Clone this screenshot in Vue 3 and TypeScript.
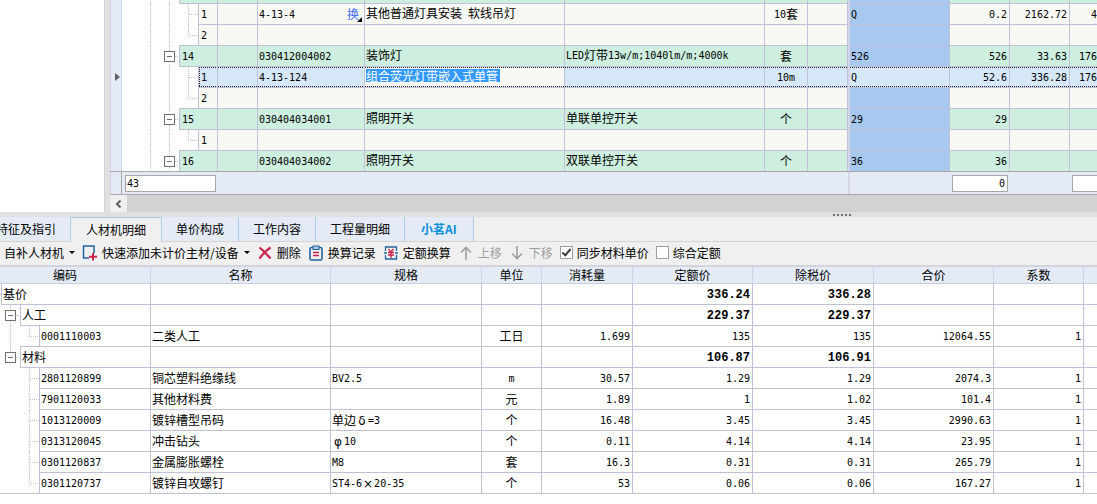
<script setup lang="ts">
import { ref } from 'vue'

interface Gutter {
  width: number
  lines: string
  rule?: number
  toggle?: boolean
}

interface BillRow {
  kind: 'item' | 'sub'
  gutter: Gutter
  no: string
  code: string
  swap?: boolean
  name: string
  spec: string
  unit: string
  expr: string
  qty: string
  price: string
  total: string
  active?: boolean
}

interface Run {
  text: string
  cls: string
}

/* Splits a label into CJK, full-width symbol and monospaced Latin runs. */
function runs(text: string): Run[] {
  const parts = text.match(/[δφ×]|[\x20-\x7e]+|[^\x20-\x7eδφ×]+/g) ?? []
  return parts.map((part) => ({
    text: part,
    cls: /^[δφ×]$/.test(part) ? 'sym' : /^[\x20-\x7e]/.test(part) ? 'mono' : 'han',
  }))
}

const itemGutter: Gutter = { width: 57, lines: 'M28.5 0V21M47.5 0V21M53 10.5H57', toggle: true }
const plainGutter: Gutter = { width: 57, lines: 'M28.5 0V21M47.5 0V21' }
const subGutter: Gutter = { width: 76, lines: 'M28.5 0V21M47.5 0V21M66.5 0V21M67 10.5H76' }
const lastGutter: Gutter = { width: 76, lines: 'M28.5 0V21M47.5 0V21M66.5 0V10M66 10.5H76', rule: 57 }

const blank = { code: '', name: '', spec: '', unit: '', expr: '', qty: '', price: '', total: '' }

const bill: BillRow[] = [
  { ...blank, kind: 'item', gutter: plainGutter, no: '' },
  { kind: 'sub', gutter: subGutter, no: '1', code: '4-13-4', swap: true, name: '其他普通灯具安装 软线吊灯', spec: '', unit: '10套', expr: 'Q', qty: '0.2', price: '2162.72', total: '4' },
  { ...blank, kind: 'sub', gutter: lastGutter, no: '2' },
  { kind: 'item', gutter: itemGutter, no: '14', code: '030412004002', name: '装饰灯', spec: 'LED灯带13w/m;1040lm/m;4000k', unit: '套', expr: '526', qty: '526', price: '33.63', total: '176' },
  { kind: 'sub', gutter: subGutter, no: '1', code: '4-13-124', name: '组合荧光灯带嵌入式单管', spec: '', unit: '10m', expr: 'Q', qty: '52.6', price: '336.28', total: '176', active: true },
  { ...blank, kind: 'sub', gutter: lastGutter, no: '2' },
  { ...blank, kind: 'item', gutter: itemGutter, no: '15', code: '030404034001', name: '照明开关', spec: '单联单控开关', unit: '个', expr: '29', qty: '29' },
  { ...blank, kind: 'sub', gutter: lastGutter, no: '1' },
  { ...blank, kind: 'item', gutter: itemGutter, no: '16', code: '030404034002', name: '照明开关', spec: '双联单控开关', unit: '个', expr: '36', qty: '36' },
]

const editing = ref('组合荧光灯带嵌入式单管')
const sumNo = ref('43')
const sumQty = ref('0')
const sumTotal = ref('')

const tabs = ['特征及指引', '人材机明细', '单价构成', '工作内容', '工程量明细', '小茗AI']
const activeTab = ref('人材机明细')
const syncPrice = ref(true)
const composite = ref(false)

const headers = ['编码', '名称', '规格', '单位', '消耗量', '定额价', '除税价', '合价', '系数', '']

const leaf: Gutter = { width: 39, lines: 'M29.5 0V21M30 10.5H39' }

interface ResourceRow {
  gutter: Gutter
  cells: string[]
  strong?: boolean
}

const resources: ResourceRow[] = [
  { gutter: { width: 1, lines: 'M0 10.5H1' }, cells: ['基价', '', '', '', '', '336.24', '336.28', '', ''], strong: true },
  { gutter: { width: 20, lines: 'M10.5 0V21M16 10.5H20', toggle: true }, cells: ['人工', '', '', '', '', '229.37', '229.37', '', ''], strong: true },
  { gutter: { width: 39, lines: 'M10.5 0V21M29.5 0V10M29 10.5H39', rule: 20 }, cells: ['0001110003', '二类人工', '', '工日', '1.699', '135', '135', '12064.55', '1'] },
  { gutter: { width: 20, lines: 'M10.5 0V10M16 10.5H20', toggle: true }, cells: ['材料', '', '', '', '', '106.87', '106.91', '', ''], strong: true },
  { gutter: leaf, cells: ['2801120899', '铜芯塑料绝缘线', 'BV2.5', 'm', '30.57', '1.29', '1.29', '2074.3', '1'] },
  { gutter: leaf, cells: ['7901120033', '其他材料费', '', '元', '1.89', '1', '1.02', '101.4', '1'] },
  { gutter: leaf, cells: ['1013120009', '镀锌槽型吊码', '单边δ=3', '个', '16.48', '3.45', '3.45', '2990.63', '1'] },
  { gutter: leaf, cells: ['0313120045', '冲击钻头', 'φ10', '个', '0.11', '4.14', '4.14', '23.95', '1'] },
  { gutter: leaf, cells: ['0301120837', '金属膨胀螺栓', 'M8', '套', '16.3', '0.31', '0.31', '265.79', '1'] },
  { gutter: { width: 39, lines: 'M29.5 0V10M29 10.5H39', rule: 0 }, cells: ['0301120737', '镀锌自攻螺钉', 'ST4-6×20-35', '个', '53', '0.06', '0.06', '167.27', '1'] },
]

function align(index: number): string {
  return index < 3 ? '' : index === 3 ? 'mid' : 'num'
}
</script>

<template>
  <div class="app">
    <section class="upper">
      <aside class="nav-pane"></aside>
      <div class="bill-pane">
        <div class="bill-view">
          <table class="grid bill">
            <colgroup>
              <col class="w12" /><col class="w96" /><col class="w40" /><col class="w107" /><col class="w200" />
              <col class="w200" /><col class="w43" /><col class="w40" /><col class="w2" /><col class="w100" />
              <col class="w60" /><col class="w60" /><col />
            </colgroup>
            <tbody>
              <tr v-for="(row, i) in bill" :key="i" :class="[row.kind, { active: row.active }]">
                <td class="band">
                  <svg v-if="row.active" class="pointer" width="5" height="8" viewBox="0 0 5 8"><path d="M0 0L5 4L0 8Z" fill="#606060" /></svg>
                </td>
                <td class="tree">
                  <div class="branch">
                    <div class="gutter">
                      <svg :width="row.gutter.width" height="21">
                        <path :d="row.gutter.lines" class="dots" />
                        <path v-if="row.gutter.rule !== undefined" :d="`M${row.gutter.rule} 20.5H${row.gutter.width}`" class="rule" />
                      </svg>
                      <button v-if="row.gutter.toggle" class="toggle" type="button" aria-label="折叠"></button>
                    </div>
                    <div class="label"><span v-for="(r, k) in runs(row.no)" :key="k" :class="r.cls">{{ r.text }}</span></div>
                  </div>
                </td>
                <td></td>
                <td>
                  <div class="code">
                    <span><span class="mono">{{ row.code }}</span></span>
                    <span v-if="row.swap" class="swap">换<svg width="5" height="5" viewBox="0 0 5 5"><path d="M5 0V5H0Z" fill="#000" /></svg></span>
                  </div>
                </td>
                <td :class="['high', { editor: row.active }]">
                  <input v-if="row.active" v-model="editing" class="edit" aria-label="名称" />
                  <template v-else><span v-for="(r, k) in runs(row.name)" :key="k" :class="r.cls">{{ r.text }}</span></template>
                </td>
                <td class="high"><span v-for="(r, k) in runs(row.spec)" :key="k" :class="r.cls">{{ r.text }}</span></td>
                <td class="mid"><span v-for="(r, k) in runs(row.unit)" :key="k" :class="r.cls">{{ r.text }}</span></td>
                <td></td>
                <td class="freeze"></td>
                <td class="expr"><span class="mono">{{ row.expr }}</span></td>
                <td class="num"><span class="mono">{{ row.qty }}</span></td>
                <td class="num"><span class="mono">{{ row.price }}</span></td>
                <td class="cut"><span class="mono">{{ row.total }}</span></td>
              </tr>
            </tbody>
          </table>
        </div>
        <div class="summary">
          <span class="s-band"></span>
          <input v-model="sumNo" class="s-no" aria-label="序号合计" />
          <span class="s-freeze"></span>
          <span></span>
          <input v-model="sumQty" class="s-num" aria-label="工程量合计" />
          <span></span>
          <input v-model="sumTotal" class="s-num s-open" aria-label="合价合计" />
        </div>
        <div class="scroll">
          <button type="button" aria-label="向左滚动">
            <svg width="7" height="8" viewBox="0 0 7 8"><path d="M5.5 0.5L2 4L5.5 7.5" fill="none" stroke="#606060" stroke-width="2" /></svg>
          </button>
        </div>
      </div>
    </section>

    <div class="splitter"><i v-for="n in 5" :key="n"></i></div>

    <nav class="tabs">
      <button
        v-for="(tab, i) in tabs"
        :key="tab"
        type="button"
        :class="{ first: i === 0, on: tab === activeTab, ai: i === 5 }"
        @click="activeTab = tab"
      >{{ tab }}</button>
    </nav>

    <div class="toolbar">
      <button type="button">自补人材机<span class="caret"></span></button>
      <button type="button" class="add">
        <svg width="15" height="16" viewBox="0 0 15 16" fill="none">
          <path d="M12 8V1H1.5V13H7" stroke="#2065a0" stroke-width="1.5" />
          <path d="M11 8V15.5M7 11.8H15" stroke="#c8254c" stroke-width="2" />
        </svg>
        <span>快速添加未计价主材/设备</span><span class="caret"></span>
      </button>
      <div class="group">
        <button type="button">
          <svg width="14" height="14" viewBox="0 0 14 14"><path d="M1.500 1.500Q6 5 12.500 12.500M12.500 1.500Q6 6 1.500 12.500" fill="none" stroke="#c8254c" stroke-width="2.200" /></svg>
          删除
        </button>
        <button type="button">
          <svg width="14" height="16" viewBox="0 0 14 16" fill="none">
            <rect x="1" y="2.500" width="12" height="12.500" rx="1.500" stroke="#2065a0" stroke-width="1.600" />
            <rect x="4" y="1" width="6" height="3.500" fill="#a9c9e4" stroke="#2065a0" />
            <path d="M4 7.500H10M4 10.500H10" stroke="#c8254c" stroke-width="1.300" />
          </svg>
          换算记录
        </button>
        <button type="button">
          <svg width="14" height="14" viewBox="0 0 14 14" fill="none">
            <path d="M1.500 5V1H12.500V5M1.500 9V13H12.500V9M0 7H3M11 7H14" stroke="#2065a0" stroke-width="1.300" />
            <path d="M4.500 3L7 6L9.500 3M4 6.500H10M4 9H10M7 6V12" stroke="#c8254c" stroke-width="1.300" />
          </svg>
          定额换算
        </button>
        <button type="button" disabled>
          <svg width="14" height="14" viewBox="0 0 14 14" fill="none" stroke="#a0a0a0" stroke-width="1.600"><path d="M7 14V1.500M2 6.500L7 1.500L12 6.500" /></svg>
          上移
        </button>
        <button type="button" disabled>
          <svg width="14" height="14" viewBox="0 0 14 14" fill="none" stroke="#a0a0a0" stroke-width="1.600"><path d="M7 0V12.500M2 7.500L7 12.500L12 7.500" /></svg>
          下移
        </button>
      </div>
      <label><input v-model="syncPrice" type="checkbox" />同步材料单价</label>
      <label><input v-model="composite" type="checkbox" />综合定额</label>
    </div>

    <table class="grid detail">
      <colgroup>
        <col class="w151" /><col class="w180" /><col class="w151" /><col class="w60" /><col class="w91" />
        <col class="w120" /><col class="w121" /><col class="w120" /><col class="w90" /><col />
      </colgroup>
      <thead>
        <tr><th v-for="(h, i) in headers" :key="i">{{ h }}</th></tr>
      </thead>
      <tbody>
        <tr v-for="(row, i) in resources" :key="i" :class="{ strong: row.strong }">
          <td class="tree">
            <div class="branch">
              <div class="gutter">
                <svg :width="row.gutter.width" height="21">
                  <path :d="row.gutter.lines" class="dots" />
                  <path v-if="row.gutter.rule !== undefined" :d="`M${row.gutter.rule} 20.5H${row.gutter.width}`" class="rule" />
                </svg>
                <button v-if="row.gutter.toggle" class="toggle" type="button" aria-label="折叠"></button>
              </div>
              <div class="label"><span v-for="(r, k) in runs(row.cells[0])" :key="k" :class="r.cls">{{ r.text }}</span></div>
            </div>
          </td>
          <td v-for="(cell, c) in row.cells.slice(1)" :key="c" :class="align(c + 1)">
            <span v-for="(r, k) in runs(cell)" :key="k" :class="r.cls">{{ r.text }}</span>
          </td>
          <td></td>
        </tr>
      </tbody>
    </table>
  </div>
</template>

<style>
body {
  margin: 0;
  background: #fff;
}
</style>

<style scoped>
.app {
  min-height: 100vh;
  overflow: hidden;
  background: #fff;
  color: #000;
  font: 12px/20px "Noto Sans CJK SC", "Liberation Sans", sans-serif;
}

button,
input {
  font: inherit;
  color: inherit;
  box-sizing: border-box;
  margin: 0;
  padding: 0;
  border: 0;
}

.upper {
  display: flex;
  background: #e0e0e0;
}

.nav-pane {
  flex: 0 0 104px;
  background: #fff;
  border-right: 1px solid #d4d4d4;
  margin-right: 5px;
}

.bill-pane {
  flex: 1;
  min-width: 0;
}

.bill-view {
  display: flex;
  align-items: flex-end;
  height: 172px;
  overflow: hidden;
  background: #fff;
}

.grid {
  width: 100%;
  table-layout: fixed;
  border-collapse: separate;
  border-spacing: 0;
}

.w2 { width: 2px; }
.w12 { width: 12px; }
.w40 { width: 40px; }
.w43 { width: 43px; }
.w60 { width: 60px; }
.w90 { width: 90px; }
.w91 { width: 91px; }
.w96 { width: 96px; }
.w100 { width: 100px; }
.w107 { width: 107px; }
.w120 { width: 120px; }
.w121 { width: 121px; }
.w151 { width: 151px; }
.w180 { width: 180px; }
.w200 { width: 200px; }

td {
  box-sizing: border-box;
  height: 21px;
  padding: 0 0 0 1px;
  border-right: 1px solid #c0c0d8;
  border-bottom: 1px solid #c0c0d8;
  overflow: hidden;
  white-space: pre;
  vertical-align: top;
}

td.mid {
  padding: 0;
  text-align: center;
}

td.num {
  padding: 0 2px 0 0;
  text-align: right;
}

td.cut {
  padding: 0;
  border-right: 0;
  text-align: right;
}

td.high {
  line-height: 17px;
}

td.tree {
  padding: 0;
  border-bottom: 0;
}

.mono {
  vertical-align: 1px;
  font: 10px/1 "DejaVu Sans Mono", "Liberation Mono", monospace;
}

.sym {
  display: inline-block;
  width: 12px;
  text-align: center;
  font: 12px/1 "DejaVu Sans", sans-serif;
}

.strong .mono {
  font: bold 12px/1 "Liberation Mono", monospace;
}

.branch {
  display: flex;
  height: 21px;
}

.gutter {
  display: grid;
  flex: none;
  background: #fff;
}

.gutter > * {
  grid-area: 1 / 1;
}

.gutter svg {
  display: block;
}

.dots {
  fill: none;
  stroke: #c0c0d8;
  stroke-dasharray: 1 1;
}

.rule {
  stroke: #c0c0d8;
}

.toggle {
  justify-self: end;
  width: 11px;
  height: 11px;
  margin: 5px 4px 0 0;
  border: 1px solid #707070;
  background: linear-gradient(#707070, #707070) center / 5px 1px no-repeat #fff;
}

.label {
  flex: 1;
  padding-left: 2px;
  border-left: 1px solid #c0c0d8;
  border-bottom: 1px solid #c0c0d8;
}

.detail .label {
  padding-left: 1px;
}

.bill td {
  background-color: #f8f8f4;
}

.bill .label {
  background-color: #f8f8f4;
}

.bill .item td,
.bill .item .label {
  background-color: #ceefdf;
}

.bill .active td,
.bill .active .label {
  background-color: #d6e8f8;
  background-image:
    repeating-linear-gradient(90deg, #202020 0 1px, transparent 1px 2px),
    repeating-linear-gradient(90deg, #202020 0 1px, transparent 1px 2px);
  background-position: top, bottom;
  background-size: 100% 1px;
  background-repeat: no-repeat;
}

.bill .active .label {
  background-image:
    repeating-linear-gradient(90deg, #202020 0 1px, transparent 1px 2px),
    repeating-linear-gradient(90deg, #202020 0 1px, transparent 1px 2px),
    repeating-linear-gradient(#202020 0 1px, transparent 1px 2px);
  background-position: top, bottom, left;
  background-size: 100% 1px, 100% 1px, 1px 100%;
}

.bill .active td.tree {
  background-image: none;
}

.bill .active td.editor {
  background-color: #f8f8f4;
}

.bill tr td.band {
  padding: 0 0 0 4px;
  border-left: 1px solid #d0d0e8;
  border-right: 1px solid #ccd6ee;
  border-bottom: 0;
  background: #e4ebf7;
}

.pointer {
  display: block;
  margin-top: 6px;
}

.bill tr td.freeze {
  padding: 0;
  border: 0;
  background: #d4d4ea;
}

.bill tr:not(.active) td.expr {
  background-color: #a7c9ef;
}

.code {
  display: flex;
  justify-content: space-between;
  height: 20px;
  padding-right: 2px;
}

.swap {
  display: flex;
  align-items: flex-end;
  color: #3d6bf5;
  height: 18px;
  line-height: 16px;
}

.swap svg {
  margin-left: -2px;
}

.edit {
  display: block;
  width: 134px;
  height: 13px;
  margin-top: 2px;
  line-height: 13px;
  background: #3399ff;
  color: #fff;
}

.summary {
  display: grid;
  grid-template-columns: 12px 726px 2px 100px 60px 60px 1fr;
  align-items: center;
  height: 24px;
  margin-top: -1px;
  box-sizing: border-box;
  position: relative;
  border-top: 1px solid #a8a8a8;
  border-bottom: 1px solid #a8a8a8;
  background: #e4ebf7;
}

.summary input {
  height: 17px;
  border: 1px solid #a8a8a8;
  background: #fff;
  font: 10px/15px "DejaVu Sans Mono", monospace;
}

.s-band {
  align-self: stretch;
  border-left: 1px solid #d0d0e8;
  border-right: 1px solid #a8a8a8;
}

.summary .s-no {
  width: 91px;
  margin-left: 3px;
  padding-left: 1px;
}

.s-freeze {
  align-self: stretch;
  background: #d4d4ea;
}

.summary .s-num {
  min-width: 0;
  margin: 0 2px;
  padding-right: 2px;
  text-align: right;
}

.summary .s-open {
  margin-right: 0;
  border-right: 0;
}

.scroll {
  display: flex;
  height: 17px;
  background: #d2d2d2;
}

.scroll button {
  display: grid;
  place-items: center;
  width: 17px;
  background: #f0f0f0;
}

.splitter {
  display: flex;
  gap: 2px;
  height: 5px;
  padding: 2px 0 0 833px;
  box-sizing: border-box;
  background: #e0e0e0;
}

.splitter i {
  width: 2px;
  height: 2px;
  background: #707070;
}

.tabs {
  display: flex;
  height: 25px;
  box-sizing: border-box;
  background: #f0f0f0;
  box-shadow: inset 0 -1px #d4d4d4;
}

.tabs button {
  padding: 0 14px;
  border-right: 1px solid #a8cbe8;
  border-bottom: 1px solid #d4d4d4;
  background: #e4ebf7;
  white-space: nowrap;
}

.tabs .first {
  display: flex;
  justify-content: flex-end;
  align-items: center;
  width: 70px;
  border-right: 0;
}

.tabs .on {
  padding: 0 15px;
  border: 1px solid #a8cbe8;
  border-bottom: 0;
  background: #f0f0f0;
}

.tabs .ai {
  padding: 0 16px;
  color: #0a8fdc;
  font-weight: bold;
}

.toolbar {
  display: flex;
  align-items: center;
  gap: 7px;
  height: 21px;
  padding: 0 0 2px 4px;
  background: #f0f0f0;
  white-space: nowrap;
}

.group {
  display: flex;
  gap: 8px;
  margin-left: 1px;
}

.toolbar button {
  display: flex;
  align-items: center;
  gap: 5px;
  background: none;
}

.toolbar button:disabled {
  color: #a0a0a0;
}

.caret {
  border: 3px solid transparent;
  border-top-color: #000;
  border-bottom: 0;
}

.toolbar label {
  display: flex;
  align-items: center;
  gap: 4px;
}

.toolbar input {
  appearance: none;
  width: 13px;
  height: 13px;
  border: 1px solid #a0a0a0;
  background: #fff;
}

.toolbar input:checked::before {
  content: "";
  display: block;
  width: 3px;
  height: 7px;
  margin: 0 0 0 3px;
  border: solid #404040;
  border-width: 0 2px 2px 0;
  transform: rotate(40deg);
}

.detail {
  border-top: 2px solid #d4d4dc;
}

.detail th {
  box-sizing: border-box;
  height: 17px;
  padding: 0;
  border-right: 1px solid #ccd4ec;
  border-bottom: 1px solid #c8cce4;
  background: #e4ebf7;
  font-weight: normal;
  line-height: 16px;
}

.detail th:first-child {
  padding-right: 20px;
}

.detail td:last-child,
.detail th:last-child {
  border-right: 0;
}
</style>
